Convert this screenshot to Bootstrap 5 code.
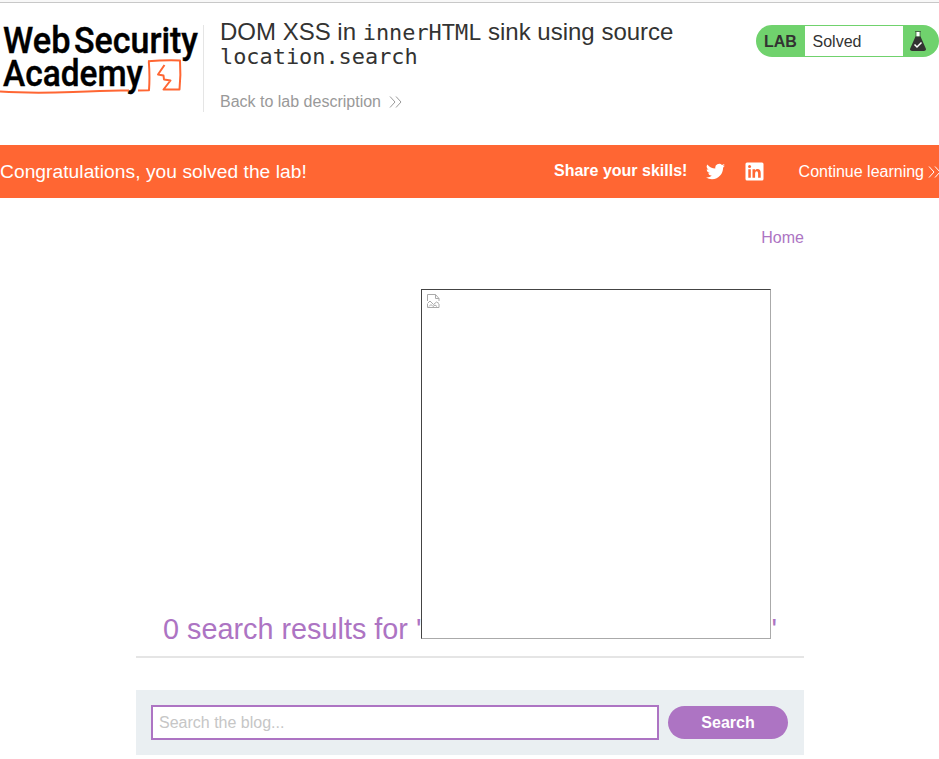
<!DOCTYPE html>
<html lang="en">
<head>
<meta charset="utf-8">
<meta name="viewport" content="width=device-width, initial-scale=1">
<title>DOM XSS in innerHTML sink using source location.search</title>
<link href="https://cdn.jsdelivr.net/npm/bootstrap@5.3.0/dist/css/bootstrap.min.css" rel="stylesheet">
<style>
body{font-family:"Liberation Sans",Arial,sans-serif;font-size:16px;line-height:18px;color:#333332;background:#fff;overflow:hidden}
.top-edge{height:3px;background:#f8f8f8;border-bottom:1px solid #c8c8c8}
.lab-header{height:142px;padding-top:22px}
.brand{width:204px;height:87px;border-right:1px solid #e5e5e5}
.brand svg{display:block;overflow:visible}
.title-area{padding-left:16px;width:500px}
.title-area h1{font-size:24px;line-height:24px;font-weight:400;margin:-5px 0 0;white-space:nowrap}
.title-area .title-line{display:block;height:25px}
.title-area code{font:21.9px/24px "DejaVu Sans Mono",monospace;color:inherit}
.back-link{color:#999;margin-top:23px}
.status{width:183px;height:32px;border-radius:16px;background:#70d26d;margin-left:auto}
.status-name{width:49px;padding:2px 0 0 8px;font-weight:700}
.status-value{width:98px;height:30px;padding:1px 0 0 7.5px;background:#fff}
.status-icon{width:36px;padding-left:7px}
.banner{height:53px;background:#f63;color:#fff}
.banner-msg{width:554px;font-size:19.2px;letter-spacing:.05px}
.share{width:151.5px;padding-bottom:2px}
.social{width:39px}
.main-area{width:668px;margin-left:136px}
.purple{color:#ad74c3}
.home-link{padding-top:31px;height:91px}
.results{height:369px;border-bottom:2px solid #e5e5e5}
.results h2{font-size:28.8px;line-height:33px;margin:0 0 -7px;font-weight:400;white-space:pre}
.missing-img{width:350px;height:350px;border:1px solid;border-color:#444 #aaa #aaa #444;padding:4px 5px}
.missing-img svg{display:block}
.search-box{height:65px;margin-top:32px;padding:0 16px 0 15px;background:#eaeff2}
.search-box .form-control{width:508px;height:35px;border:2px solid #ad74c3;border-radius:0;padding:0 6px;font-size:16px;line-height:18px;box-shadow:none}
.search-box .form-control::placeholder{color:#c6c6c6;opacity:1}
.search-box .btn{width:120px;height:33px;padding:0;margin-left:9px;background:#ad74c3;color:#fff;font-weight:700;line-height:18px;border:0}
</style>
<script src="https://cdn.jsdelivr.net/npm/bootstrap@5.3.0/dist/js/bootstrap.bundle.min.js"></script>
</head>
<body>
<div class="top-edge"></div>
<header class="lab-header d-flex align-items-start">
  <div class="brand flex-shrink-0">
    <svg width="203" height="87" viewBox="0 25 203 87" role="img" aria-label="Web Security Academy">
      <g font-family="Roboto, sans-serif" font-weight="500" font-size="37.500" fill="#000" stroke="#000" stroke-width=".4">
        <text x="3" y="53" textLength="67.500" lengthAdjust="spacingAndGlyphs">Web</text>
        <text x="74" y="53" textLength="124" lengthAdjust="spacingAndGlyphs">Security</text>
        <text x="3" y="86" textLength="140" lengthAdjust="spacingAndGlyphs">Academy</text>
      </g>
      <g fill="none" stroke="#f63" stroke-width="2" stroke-linejoin="round">
        <path d="M0 91.500Q30 93.500 73 92Q110 90 129 90.500M138 90.500L149 90.300Q150 76 148.800 61.500"/>
        <path d="M148 61.300Q164 60 180 60.500Q181 75 179.500 89.500L163.500 89.500L170.500 80.500L164 79.500L163.500 75.500L158 74.500L164.500 65"/>
      </g>
    </svg>
  </div>
  <div class="title-area flex-shrink-0">
    <h1><span class="title-line">DOM XSS in <code>innerHTML</code> sink using source</span><span class="title-line"><code class="d-block">location.search</code></span></h1>
    <a href="#" class="back-link d-flex align-items-center text-decoration-none">Back to lab description
      <svg class="ms-2" width="13" height="12" viewBox="0 0 13 12" fill="none" stroke="#999"><path d="M1 .5L6 6L1 11.500M7 .5L12 6L7 11.500"/></svg>
    </a>
  </div>
  <div class="status d-flex align-items-center flex-shrink-0">
    <span class="status-name">LAB</span><span class="status-value d-flex align-items-center">Solved</span>
    <span class="status-icon"><svg class="d-block" width="16" height="20" viewBox="0 0 16 20"><path d="M5 .5H11M6 1V7M10 1V7" stroke="#333332" fill="none" stroke-opacity=".65"/><path d="M6.500 1H9.500V5.500H6.500Z" fill="#fff"/><path d="M5.500 5.500H10.500L15.800 17.500Q16.300 20 14 20H2Q-.3 20 .2 17.500Z" fill="#333332"/><path d="M4.500 13.500L7 16L11.500 11.500" fill="none" stroke="#fff" stroke-width="1.500"/></svg></span>
  </div>
</header>
<section class="banner d-flex align-items-center">
  <div class="banner-msg flex-shrink-0">Congratulations, you solved the lab!</div>
  <strong class="share flex-shrink-0">Share your skills!</strong>
  <a href="#" class="social flex-shrink-0" aria-label="Twitter"><svg class="d-block" width="19" height="19" viewBox="0 0 24 24" fill="#fff"><path d="M24 4.560a10 10 0 0 1-2.830.780 4.940 4.940 0 0 0 2.170-2.730 9.900 9.900 0 0 1-3.130 1.200 4.920 4.920 0 0 0-8.380 4.480A13.980 13.980 0 0 1 1.670 3.150a4.920 4.920 0 0 0 1.520 6.570 4.900 4.900 0 0 1-2.230-.61v.06a4.920 4.920 0 0 0 3.950 4.830 5 5 0 0 1-2.220.080 4.930 4.930 0 0 0 4.600 3.420A9.870 9.870 0 0 1 0 19.540a13.940 13.940 0 0 0 7.550 2.210c9.140 0 14.300-7.720 14-14.640A10 10 0 0 0 24 4.560z"/></svg></a>
  <a href="#" aria-label="LinkedIn"><svg class="d-block" width="19" height="19" viewBox="0 0 19 19"><rect x=".5" y=".5" width="18" height="18" rx="1.500" fill="#fff"/><path fill="#f63" d="M3.300 7.300H5.800V15.800H3.300ZM7.500 7.300H10V8.500Q10.800 7.100 12.500 7.100Q15.700 7.100 15.700 10.900V15.800H13.100V11.400Q13.100 9.300 11.700 9.300Q10.100 9.300 10.100 11.500V15.800H7.500Z"/><circle cx="4.550" cy="4.600" r="1.500" fill="#f63"/></svg></a>
  <a href="#" class="d-flex align-items-center text-white text-decoration-none text-nowrap ms-auto">Continue learning<svg class="ms-1" width="11" height="12" viewBox="0 0 11 12" fill="none" stroke="#fff"><path d="M1 .5L6 6L1 11.500M7 .5L12 6L7 11.500"/></svg></a>
</section>
<main class="main-area">
  <nav class="home-link text-end"><a href="#" class="purple text-decoration-none">Home</a></nav>
  <section class="results d-flex justify-content-center align-items-start">
    <div class="d-flex align-items-end">
      <h2 class="purple">0 search results for '</h2>
      <div class="missing-img"><svg width="13" height="15" viewBox="0 0 13 15" fill="none" stroke="#aaa"><path d="M.5 7V.5H8.500L12 4.500V7M8.500 .5V4.500H12M.5 9.500L3 7L6.500 10.500L9.500 8L12 9.500M.5 10V13.500H12V10M2 12.500L4 10.500L6 12.500L8 11L10 12.500"/></svg></div>
      <h2 class="purple">'</h2>
    </div>
  </section>
  <form class="search-box d-flex align-items-center">
    <input type="text" class="form-control" placeholder="Search the blog..." aria-label="Search the blog">
    <button type="button" class="btn rounded-pill">Search</button>
  </form>
</main>
</body>
</html>
